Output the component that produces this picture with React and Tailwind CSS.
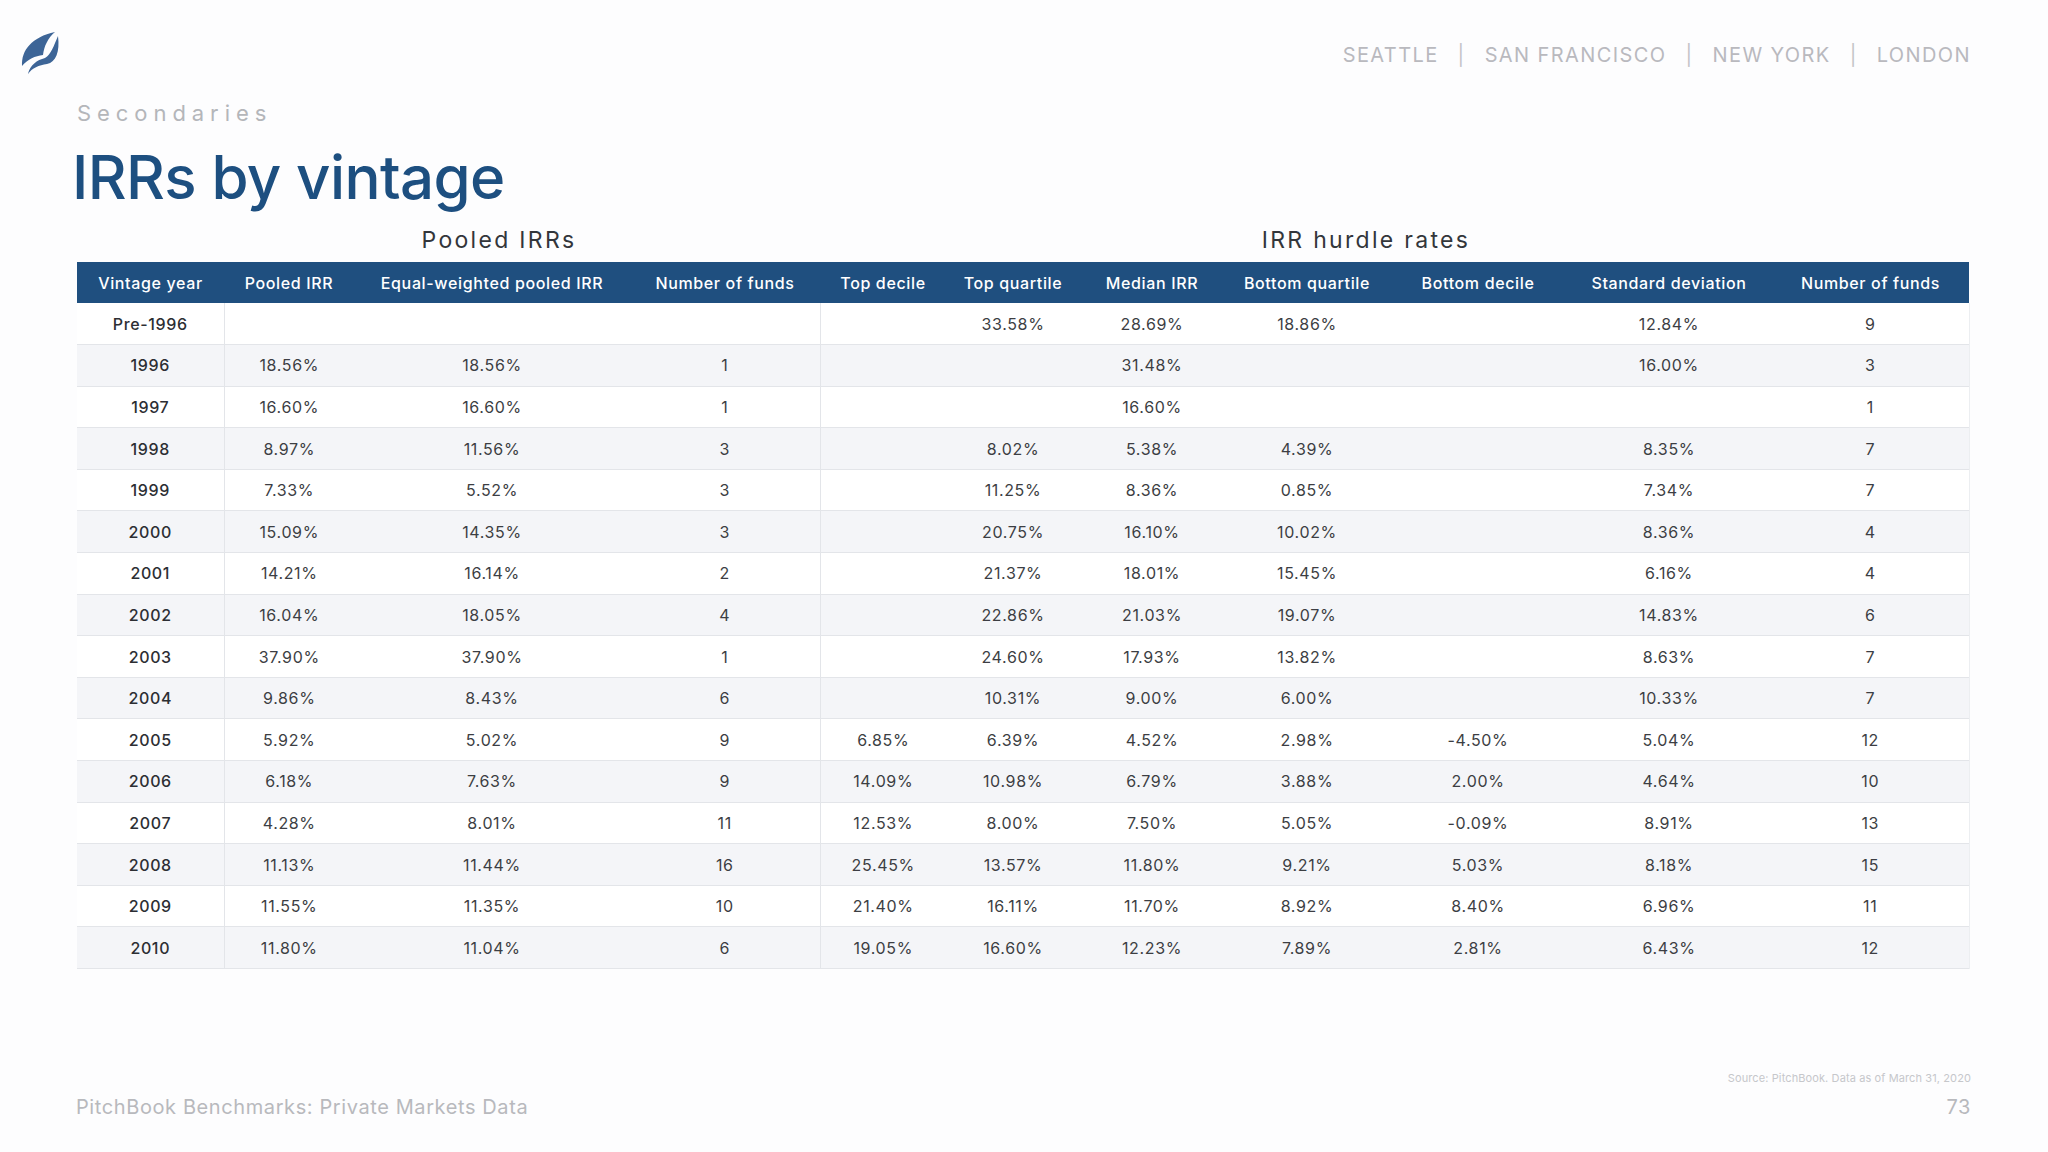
const FONT = { fontFamily: 'Inter, "Open Sans", sans-serif' }

const COLS = [
  { label: 'Vintage year', w: 147 },
  { label: 'Pooled IRR', w: 130 },
  { label: 'Equal-weighted pooled IRR', w: 276 },
  { label: 'Number of funds', w: 190 },
  { label: 'Top decile', w: 126 },
  { label: 'Top quartile', w: 134 },
  { label: 'Median IRR', w: 144 },
  { label: 'Bottom quartile', w: 166 },
  { label: 'Bottom decile', w: 176 },
  { label: 'Standard deviation', w: 206 },
  { label: 'Number of funds', w: 197 },
]

const ROWS = [
  ['Pre-1996', '', '', '', '', '33.58%', '28.69%', '18.86%', '', '12.84%', '9'],
  ['1996', '18.56%', '18.56%', '1', '', '', '31.48%', '', '', '16.00%', '3'],
  ['1997', '16.60%', '16.60%', '1', '', '', '16.60%', '', '', '', '1'],
  ['1998', '8.97%', '11.56%', '3', '', '8.02%', '5.38%', '4.39%', '', '8.35%', '7'],
  ['1999', '7.33%', '5.52%', '3', '', '11.25%', '8.36%', '0.85%', '', '7.34%', '7'],
  ['2000', '15.09%', '14.35%', '3', '', '20.75%', '16.10%', '10.02%', '', '8.36%', '4'],
  ['2001', '14.21%', '16.14%', '2', '', '21.37%', '18.01%', '15.45%', '', '6.16%', '4'],
  ['2002', '16.04%', '18.05%', '4', '', '22.86%', '21.03%', '19.07%', '', '14.83%', '6'],
  ['2003', '37.90%', '37.90%', '1', '', '24.60%', '17.93%', '13.82%', '', '8.63%', '7'],
  ['2004', '9.86%', '8.43%', '6', '', '10.31%', '9.00%', '6.00%', '', '10.33%', '7'],
  ['2005', '5.92%', '5.02%', '9', '6.85%', '6.39%', '4.52%', '2.98%', '-4.50%', '5.04%', '12'],
  ['2006', '6.18%', '7.63%', '9', '14.09%', '10.98%', '6.79%', '3.88%', '2.00%', '4.64%', '10'],
  ['2007', '4.28%', '8.01%', '11', '12.53%', '8.00%', '7.50%', '5.05%', '-0.09%', '8.91%', '13'],
  ['2008', '11.13%', '11.44%', '16', '25.45%', '13.57%', '11.80%', '9.21%', '5.03%', '8.18%', '15'],
  ['2009', '11.55%', '11.35%', '10', '21.40%', '16.11%', '11.70%', '8.92%', '8.40%', '6.96%', '11'],
  ['2010', '11.80%', '11.04%', '6', '19.05%', '16.60%', '12.23%', '7.89%', '2.81%', '6.43%', '12'],
]

// two-blade sail mark
function Logo() {
  return (
    <svg width="42" height="46" viewBox="20 30 42 46" aria-hidden="true">
      <path d="M22 66 C21 50 32 37 55 32 C48 38 44 46 43 55 C35 56 28 59 22 66 Z" fill="#3d6597" />
      <path d="M28 74 C30 65 37 60 45 58 C51 55 54 45 58 36 C60 52 56 62 47 64 C39 65 32 68 28 74 Z" fill="#3d6597" />
    </svg>
  )
}

export default function App() {
  return (
    <div className="w-[2048px] h-[1152px] bg-[#fdfdfe] flex flex-col overflow-hidden" style={FONT}>
      <header className="flex items-start justify-between pl-[20px] pr-[77px] pt-[30px]">
        <Logo />
        <div className="mt-[10px] flex items-center gap-[19px] text-[20px] tracking-[0.07em] text-[#b9b9be]">
          <span>SEATTLE</span>
          <span className="text-[#c4c4c8]">|</span>
          <span>SAN FRANCISCO</span>
          <span className="text-[#c4c4c8]">|</span>
          <span>NEW YORK</span>
          <span className="text-[#c4c4c8]">|</span>
          <span>LONDON</span>
        </div>
      </header>

      <div className="pl-[77px] mt-[26px] text-[22px] leading-none tracking-[0.27em] text-[#b4b6ba]">Secondaries</div>
      <h1 className="pl-[72px] mt-[23px] text-[60px] leading-none font-medium tracking-[-0.01em] text-[#1d4f80]">IRRs by vintage</h1>

      <div className="pl-[77px] mt-[22px] flex text-[23px] leading-none tracking-[0.1em] text-[#33363b]">
        <div className="w-[844px] text-center">Pooled IRRs</div>
        <div className="w-[890px] text-center">IRR hurdle rates</div>
      </div>

      <div className="pl-[77px] mt-[10px]">
        <table className="table-fixed border-collapse w-[1892px] text-[16px] tracking-[0.04em]">
          <colgroup>
            {COLS.map((c, i) => (
              <col key={i} style={{ width: c.w }} />
            ))}
          </colgroup>
          <thead>
            <tr className="h-[41px] bg-[#1f4f7f] text-white">
              {COLS.map((c, i) => (
                <th key={i} className="font-medium text-center whitespace-nowrap">
                  {c.label}
                </th>
              ))}
            </tr>
          </thead>
          <tbody>
            {ROWS.map((row, r) => (
              <tr
                key={r}
                className={`h-[41.6px] border-b border-[#e3e5e9] ${r % 2 === 1 ? 'bg-[#f4f5f8]' : 'bg-white'}`}
              >
                {row.map((v, i) => (
                  <td
                    key={i}
                    className={`text-center whitespace-nowrap ${
                      i === 0 ? 'font-medium text-[#2c2e33] border-r border-[#e3e5e9]' : 'text-[#3c3e43]'
                    } ${i === 3 ? 'border-r border-[#e3e5e9]' : ''} ${i === 10 ? 'border-r border-[#eceef1]' : ''}`}
                  >
                    {v}
                  </td>
                ))}
              </tr>
            ))}
          </tbody>
        </table>
      </div>

      <div className="flex-1" />

      <div className="pr-[77px] text-right text-[11px] leading-none tracking-[0.01em] text-[#c6c7cb]">Source: PitchBook. Data as of March 31, 2020</div>
      <footer className="flex items-center justify-between pl-[76px] pr-[77px] mt-[13px] mb-[35px] text-[20px] leading-none tracking-[0.03em] text-[#b8b9bd]">
        <span>PitchBook Benchmarks: Private Markets Data</span>
        <span className="text-[20px]">73</span>
      </footer>
    </div>
  )
}
